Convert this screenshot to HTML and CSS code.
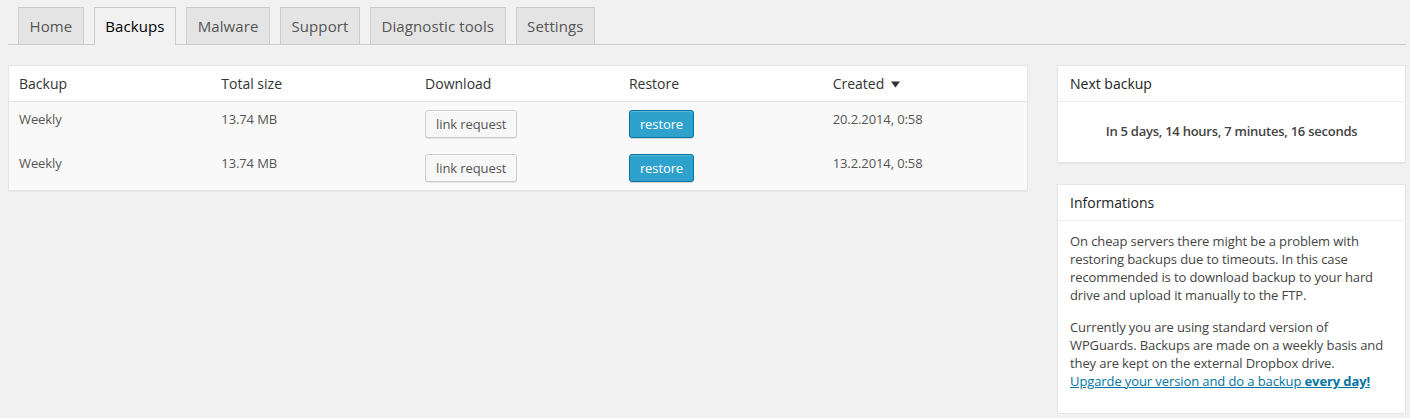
FILE: index.html
```html
<!DOCTYPE html>
<html lang="en">
<head>
<meta charset="utf-8">
<title>WPGuards - Backups</title>
<link rel="stylesheet" href="styles.css">
</head>
<body>
<div class="wrap">
  <nav class="tabs">
    <a class="tab">Home</a>
    <a class="tab active">Backups</a>
    <a class="tab">Malware</a>
    <a class="tab">Support</a>
    <a class="tab">Diagnostic tools</a>
    <a class="tab">Settings</a>
  </nav>
  <div class="layout">
    <div class="main">
      <table class="backups">
        <thead>
          <tr>
            <th>Backup</th>
            <th>Total size</th>
            <th>Download</th>
            <th>Restore</th>
            <th>Created <svg class="sort" width="9" height="7" viewBox="0 0 9 7"><path d="M0 0.5h9L4.5 6.5z" fill="#333"/></svg></th>
          </tr>
        </thead>
        <tbody>
          <tr>
            <td>Weekly</td>
            <td>13.74 MB</td>
            <td><button class="btn">link request</button></td>
            <td><button class="btn primary">restore</button></td>
            <td>20.2.2014, 0:58</td>
          </tr>
          <tr>
            <td>Weekly</td>
            <td>13.74 MB</td>
            <td><button class="btn">link request</button></td>
            <td><button class="btn primary">restore</button></td>
            <td>13.2.2014, 0:58</td>
          </tr>
        </tbody>
      </table>
    </div>
    <aside class="side">
      <section class="postbox">
        <h3 class="postbox-title">Next backup</h3>
        <div class="countdown">In 5 days, 14 hours, 7 minutes, 16 seconds</div>
      </section>
      <section class="postbox">
        <h3 class="postbox-title">Informations</h3>
        <div class="inside">
          <p>On cheap servers there might be a problem with restoring backups due to timeouts. In this case recommended is to download backup to your hard drive and upload it manually to the FTP.</p>
          <p>Currently you are using standard version of WPGuards. Backups are made on a weekly basis and they are kept on the external Dropbox drive.<br><a class="link" href="#">Upgarde your version and do a backup <strong>every day!</strong></a></p>
        </div>
      </section>
    </aside>
  </div>
</div>
</body>
</html>
```

FILE: styles.css
```css
* { box-sizing: border-box; }

html, body {
  margin: 0;
  padding: 0;
  background: #f1f1f1;
}

body {
  font-family: "Open Sans", "Liberation Sans", sans-serif;
  font-size: 13px;
  color: #444;
  letter-spacing: -0.1px;
}

.wrap {
  padding: 7px 4px 0 8px;
}

/* Tabs */
.tabs {
  display: flex;
  border-bottom: 1px solid #ccc;
  height: 38px;
}

.tab {
  display: block;
  margin-left: 10px;
  padding: 6px 10.5px;
  height: 37px;
  font-size: 15px;
  line-height: 24px;
  letter-spacing: 0.1px;
  color: #555;
  background: #e4e4e4;
  border: 1px solid #ccc;
  border-bottom: none;
  text-decoration: none;
  white-space: nowrap;
}

.tab.active {
  background: #f1f1f1;
  color: #000;
  height: 38px;
}

/* Layout */
.layout {
  display: grid;
  grid-template-columns: 1fr 349px;
  column-gap: 29px;
  margin-top: 20px;
  align-items: start;
}

/* Table */
.backups {
  width: 100%;
  border-collapse: collapse;
  table-layout: fixed;
  background: #fff;
  border: 1px solid #e5e5e5;
  box-shadow: 0 1px 1px rgba(0,0,0,.04);
}

.backups th {
  text-align: left;
  font-weight: 400;
  font-size: 14px;
  line-height: 19px;
  letter-spacing: 0;
  color: #333;
  padding: 8px 10px 8px 9px;
  border-bottom: 1px solid #e1e1e1;
}

.backups td {
  background: #f9f9f9;
  vertical-align: top;
  padding: 8px 10px 8px 9px;
  height: 44px;
  line-height: 19px;
  color: #555;
}

.backups th:first-child,
.backups td:first-child {
  padding-left: 10px;
}

.sort {
  margin-left: 3px;
  vertical-align: 1px;
}

.btn {
  font-family: inherit;
  font-size: 13px;
  letter-spacing: -0.1px;
  height: 28px;
  line-height: 26px;
  padding: 0 10px;
  border-radius: 3px;
  border: 1px solid #ccc;
  background: #f7f7f7;
  color: #555;
  box-shadow: inset 0 1px 0 #fff, 0 1px 0 rgba(0,0,0,.08);
  display: block;
  cursor: pointer;
}

.btn.primary {
  background: #2ea2cc;
  border-color: #0074a2;
  color: #fff;
  box-shadow: inset 0 1px 0 rgba(120,200,230,.5), 0 1px 0 rgba(0,0,0,.15);
}

/* Side */
.side {
  display: flex;
  flex-direction: column;
  gap: 21px;
}

.postbox {
  background: #fff;
  border: 1px solid #e5e5e5;
  box-shadow: 0 1px 1px rgba(0,0,0,.04);
}

.postbox-title {
  margin: 0;
  font-size: 14px;
  font-weight: 400;
  line-height: 19px;
  letter-spacing: 0;
  color: #222;
  padding: 8px 12px;
  border-bottom: 1px solid #eee;
}

.countdown {
  text-align: center;
  font-weight: 600;
  line-height: 18px;
  letter-spacing: -0.25px;
  padding: 20px 12px 22px;
  color: #444;
}

.inside {
  padding: 11px 12px 23px;
}

.inside p {
  margin: 0;
  line-height: 18px;
}

.inside p + p {
  margin-top: 14px;
}

.link {
  color: #0074a2;
  text-decoration: underline;
}

.link strong {
  font-weight: 700;
}
```
